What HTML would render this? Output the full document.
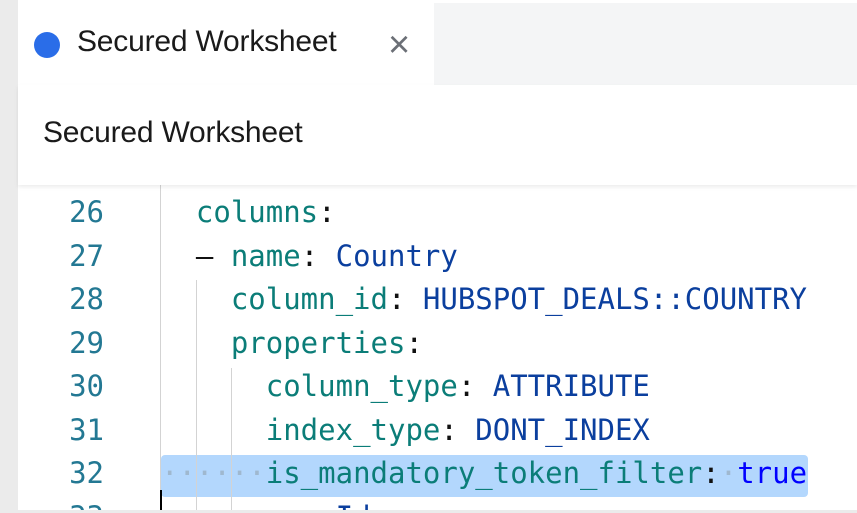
<!DOCTYPE html><html><head><style>
html,body{margin:0;width:857px;height:513px;overflow:hidden}
body{background:#ebebeb;position:relative;font-family:"Liberation Sans",sans-serif}
.main{position:absolute;left:18px;top:0;width:839px;height:510px;background:#fff}
.tabbar{position:absolute;left:18px;top:3px;width:839px;height:82px;background:#f4f5f6}
.tab{position:absolute;left:18px;top:3px;width:416px;height:82px;background:#fff}
.dot{position:absolute;left:34px;top:32px;width:26px;height:26px;border-radius:50%;background:#2a6de8}
.tt{position:absolute;left:77px;top:25px;font-size:30px;color:#1a1a1a;letter-spacing:-0.2px;line-height:34px}
.x{position:absolute;left:388px;top:26px;font-size:38px;color:#6b6f76;line-height:38px}
.hdr{position:absolute;left:18px;top:85px;width:839px;height:100px;background:#fff;box-shadow:0 2px 4px rgba(0,0,0,.08);z-index:2}
.ht{position:absolute;left:43px;top:116px;font-size:30px;color:#1a1a1a;letter-spacing:-0.2px;line-height:34px;z-index:3}
.code{position:absolute;left:18px;top:185px;width:839px;height:325px;overflow:hidden;font-family:"DejaVu Sans Mono","Liberation Mono",monospace;font-size:29px}
.ln{position:absolute;left:0;width:86px;text-align:right;color:#237893;height:43.5px;line-height:43.5px}
.l{position:absolute;left:143px;white-space:pre;height:43.5px;line-height:43.5px;color:#111}
.k{color:#0b7d78}.v{color:#0b3f9e}.b{color:#0000ff}
.g{position:absolute;width:1px;background:#d3d3d3}
.hl{position:absolute;left:143px;top:270px;width:647px;height:42px;background:#b3d7fd;border-radius:4px}
.dots{color:#9fb8cf}
</style></head><body>
<div class="main"></div>
<div class="tabbar"></div>
<div class="tab"></div>
<div class="dot"></div>
<div class="tt">Secured Worksheet</div>
<div class="x">×</div>
<div class="hdr"></div>
<div class="ht">Secured Worksheet</div>
<div class="code">
<div class="hl"></div>
<div class="g" style="left:142px;top:0;height:325px"></div>
<div class="g" style="left:178px;top:95px;height:230px"></div>
<div class="g" style="left:213px;top:183px;height:142px"></div>
<div style="position:absolute;left:142px;top:305px;width:2px;height:25px;background:#000"></div>
<div class="ln" style="top:6px">26</div><div class="l" style="top:6px">  <span class="k">columns</span>:</div>
<div class="ln" style="top:49.5px">27</div><div class="l" style="top:49.5px">  – <span class="k">name</span>: <span class="v">Country</span></div>
<div class="ln" style="top:93px">28</div><div class="l" style="top:93px">    <span class="k">column_id</span>: <span class="v">HUBSPOT_DEALS::COUNTRY</span></div>
<div class="ln" style="top:136.5px">29</div><div class="l" style="top:136.5px">    <span class="k">properties</span>:</div>
<div class="ln" style="top:180px">30</div><div class="l" style="top:180px">      <span class="k">column_type</span>: <span class="v">ATTRIBUTE</span></div>
<div class="ln" style="top:223.5px">31</div><div class="l" style="top:223.5px">      <span class="k">index_type</span>: <span class="v">DONT_INDEX</span></div>
<div class="ln" style="top:267px">32</div><div class="l" style="top:267px"><span class="dots">······</span><span class="k">is_mandatory_token_filter</span>:<span class="dots">·</span><span class="b">true</span></div>
<div class="ln" style="top:310.5px">33</div><div class="l" style="top:310.5px">  – <span class="k">name</span>: <span class="v">Id</span></div>
</div>
</body></html>
